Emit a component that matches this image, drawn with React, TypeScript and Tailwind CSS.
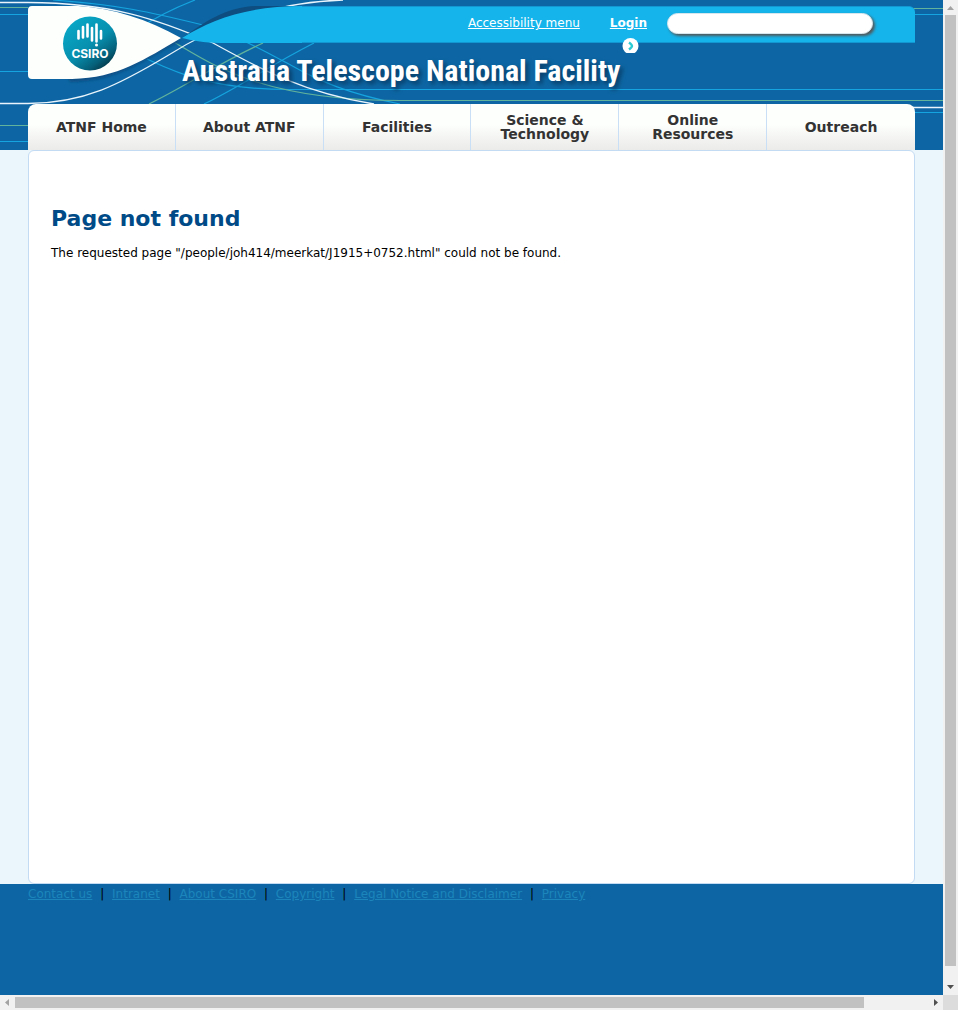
import React from "react";

const navItems = ["ATNF Home", "About ATNF", "Facilities", "Science & Technology", "Online Resources", "Outreach"];
const footerLinks = ["Contact us", "Intranet", "About CSIRO", "Copyright", "Legal Notice and Disclaimer", "Privacy"];

function HeaderArt() {
  return (
    <svg className="pointer-events-none absolute inset-0 h-full w-full" aria-hidden="true" fill="none">
      <defs>
        <linearGradient id="badge" x1="0.2" y1="0.1" x2="0.85" y2="0.95">
          <stop offset="0" stopColor="#08a6c5" />
          <stop offset="0.5" stopColor="#078fae" />
          <stop offset="0.8" stopColor="#05607a" />
          <stop offset="1" stopColor="#03313f" />
        </linearGradient>
        <filter id="soft" x="-10%" y="-20%" width="120%" height="150%">
          <feGaussianBlur stdDeviation="1.5" />
        </filter>
      </defs>
      <g stroke="#15a4df" strokeWidth="1.200">
        <path d="M0 14.5H28M0 71.5H28M0 141.5H28" />
        <path d="M53 0C120 5 150 12 203 25" />
        <path d="M195 0C172 9 150 21 138 29" />
        <path d="M210 25C250 43 268 53 287 63C320 82 350 94 400 104" />
        <path d="M147 59C175 72 210 89.500 290 89.500" />
        <path d="M204 104C240 87 265 68 314 43" />
        <line x1="289" y1="89.5" x2="100%" y2="89.5" />
        <line x1="400" y1="14.5" x2="100%" y2="14.5" />
        <line x1="400" y1="112.5" x2="100%" y2="112.5" />
      </g>
      <g stroke="#62b39c" strokeWidth="1.200">
        <path d="M0 7.500H28M0 125.500H28" />
        <path d="M172 41C210 63 260 100.500 400 100.500" />
        <path d="M149 104C190 84 215 65 263 43" />
        <line x1="399" y1="100.5" x2="100%" y2="100.5" />
        <line x1="400" y1="8.5" x2="100%" y2="8.5" />
      </g>
      <g stroke="#e9f4fc" strokeWidth="1.300">
        <path d="M0 2.500H28C110 3 155 18 213 43C255 66 300 92 374 104" />
        <path d="M0 103.500H28C85 103 120 84 167 56C215 26 270 2 343 0" />
        <line x1="400" y1="107.5" x2="100%" y2="107.5" />
      </g>
      <path d="M36 9H83C115 12 150 26 181 41C140 62 117 82 70 82Z" fill="#0a4f86" filter="url(#soft)" />
      <path d="M32 6H78C113 8 147 19 181 38C145 59 118 78 72 79H32Q28 79 28 75V10Q28 6 32 6Z" fill="#fdfffd" />
      <path d="M182 38C203 23 227 6 258 6H310V20Z" fill="#0e4d80" />
      <path d="M182 38C212 19 248 6 303 6V43H220C204 43 191 40 182 38Z" fill="#15b5ec" />
      <circle cx="90" cy="43.500" r="27" fill="url(#badge)" />
      <path d="M78.500 31V38.500M83 27V37.500M87.500 24.500V36.500M92 28V40.500M96.500 24.500V41.500M101 31V38.500" stroke="#fff" strokeWidth="2.600" strokeLinecap="round" />
      <circle cx="96.500" cy="45" r="1.500" fill="#fff" />
      <text x="90" y="57.500" textAnchor="middle" fill="#fff" className="font-['Inter'] text-[12px] font-bold">CSIRO</text>
    </svg>
  );
}

function Arrow({ d, dark }: { d: string; dark?: boolean }) {
  return (
    <svg width="15" height="15" className="block shrink-0" aria-hidden="true">
      <path d={d} className={dark ? "fill-[#505050]" : "fill-[#a3a3a3]"} />
    </svg>
  );
}

export default function App() {
  return (
    <div className="grid min-h-screen grid-cols-[minmax(0,1fr)_15px] grid-rows-[1fr_15px] bg-[#f1f1f1] font-['DejaVu_Sans',sans-serif] text-xs text-black">
      <div className="flex flex-col bg-[#eaf6fc]">
        <header className="relative overflow-hidden bg-[#0d66a3] px-7">
          <HeaderArt />
          <div className="relative flex h-[104px] pt-1.5">
            <a href="#" aria-label="CSIRO" className="h-[73px] w-[154px] shrink-0" />
            <div className="min-w-0 flex-1">
              <div className="ml-[120px] flex h-[37px] items-start justify-end rounded-tr-md border-y border-[#1397d3] bg-[#15b5ec] pr-[42px] pt-1.5 text-white">
                <a href="#" className="mt-0.5 mr-[30px] leading-4 underline">Accessibility menu</a>
                <form className="flex" onSubmit={(e) => e.preventDefault()}>
                  <div className="relative mr-5 pt-0.5">
                    <a href="#" className="block font-bold leading-4 underline">Login</a>
                    <button type="submit" aria-label="Search" className="absolute left-3 top-6 h-4 w-4">
                      <svg width="17" height="15" className="block" aria-hidden="true">
                        <circle cx="8.500" cy="8" r="8" fill="#fff" />
                        <path d="M7 4.500C9 6 10 7 10 8S9 10 7 11.500" fill="none" stroke="#2ccbd3" strokeWidth="2.400" />
                      </svg>
                    </button>
                  </div>
                  <input type="text" aria-label="Search text" className="h-[21px] w-[206px] rounded-full border border-[#d5e6ee] bg-white px-3 text-black shadow-[2px_2px_3px_#555] outline-none" />
                </form>
              </div>
              <div className="pt-3 font-['Roboto_Condensed','Liberation_Sans_Narrow','Open_Sans_Condensed',sans-serif] text-[30px] font-bold leading-8 whitespace-nowrap text-white [text-shadow:3px_3px_4px_#083d68]">
                Australia Telescope National Facility
              </div>
            </div>
          </div>
          <nav className="relative grid h-[46px] grid-cols-6 overflow-hidden rounded-t-[8px] bg-linear-to-b from-[#fdfffd] from-45% to-[#ebebe9]">
            {navItems.map((item) => (
              <a key={item} href="#" className="flex items-center justify-center border-r border-[#c8dff5] px-6 text-center text-sm font-bold leading-[14px] text-[#333] last:border-r-0">
                {item}
              </a>
            ))}
          </nav>
        </header>
        <main className="mx-7 flex-1 rounded-md border border-[#c3dbf3] bg-white px-[22px] pt-[54px]">
          <h1 className="text-[22px] font-bold leading-7 text-[#004b87]">Page not found</h1>
          <p className="mt-3 leading-4">The requested page "/people/joh414/meerkat/J1915+0752.html" could not be found.</p>
        </main>
        <footer className="min-h-[111px] bg-[#0d66a3] px-7 pt-0.5">
          <ul className="leading-4">
            {footerLinks.map((label, i) => (
              <li key={label} className="inline">
                {i > 0 && <span className="mx-1"> | </span>}
                <a href="#" className="text-[#1c85bb] underline">{label}</a>
              </li>
            ))}
          </ul>
        </footer>
      </div>
      <div className="flex flex-col" aria-hidden="true">
        <Arrow d="M4 10H11L7.500 6Z" />
        <div className="flex flex-1 flex-col">
          <div className="mx-0.5 h-[98.500%] w-[11px] bg-[#c1c1c1]" />
        </div>
        <Arrow dark d="M4 5H11L7.500 9Z" />
      </div>
      <div className="flex" aria-hidden="true">
        <Arrow d="M9 4V11L5 7.500Z" />
        <div className="flex-1 py-0.5">
          <div className="h-[11px] w-[93%] bg-[#c1c1c1]" />
        </div>
        <Arrow dark d="M6 4V11L10 7.500Z" />
      </div>
      <div className="bg-[#dcdcdc]" />
    </div>
  );
}
